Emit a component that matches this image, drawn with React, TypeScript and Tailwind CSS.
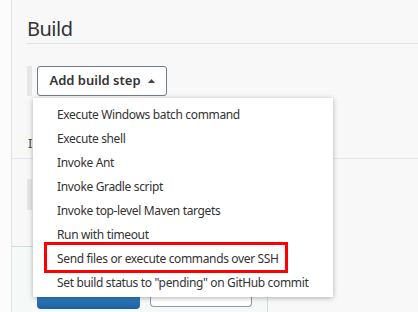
import React from "react";

const items = [
  "Execute Windows batch command",
  "Execute shell",
  "Invoke Ant",
  "Invoke Gradle script",
  "Invoke top-level Maven targets",
  "Run with timeout",
  "Send files or execute commands over SSH",
  'Set build status to "pending" on GitHub commit',
];

const font = { fontFamily: '"Noto Sans", "Open Sans", sans-serif' };

const App = () => {
  return (
    <div
      className="flex h-[312px] w-[418px] overflow-hidden bg-[#f8f8f8] text-[#333]"
      style={font}
    >
      {/* left gutter */}
      <div className="w-[12px] shrink-0 border-r border-[#e2e2e2] bg-[#fcfcfc]" />

      <div className="relative flex-1">
        {/* heading */}
        <div className="ml-[15px] h-[44px] border-b border-[#e4e4e4] pt-[16px]">
          <h2 className="text-[20px] leading-[26px] font-normal tracking-[-0.5px] text-[#333]">Build</h2>
        </div>

        {/* add build step */}
        <div className="mt-[22px] flex items-center pl-[15px]">
          <div className="h-[30px] w-[5px] bg-[#e6e6e6]" />
          <button className="ml-[5px] flex h-[30px] w-[130px] items-center justify-center gap-[7px] rounded-[3px] border-[1.5px] border-[#707d8b] bg-white text-[13px] font-semibold text-[#333]">
            Add build step
            <svg width="7" height="4" viewBox="0 0 7 4">
              <path d="M0 4 L3.5 0 L7 4 Z" fill="#444" />
            </svg>
          </button>
        </div>

        <div className="mt-[38px] h-[25px] border-b border-[#e6e6e6] pl-[16px] text-[13px] leading-[18px] text-[#5a4632]">
          I
        </div>

        <div className="mt-[20px] pl-[15px]">
          <div className="h-[31px] w-[5px] bg-[#e6e6e6]" />
        </div>

        {/* bottom panel */}
        <div className="mt-[36px] h-[70px] w-[256px] border-t border-r border-[#cfded6] bg-[#f5f9f7] pl-[25px] pt-[48px]">
          <div className="flex gap-[10px]">
            <div className="h-[14px] w-[103px] rounded-b-[4px] bg-gradient-to-b from-[#3585c8] to-[#1d5f9e]" />
            <div className="h-[12px] w-[102px] rounded-b-[4px] border-[1.5px] border-t-0 border-[#8b97a3] bg-white" />
          </div>
        </div>

        {/* dropdown menu */}
        <div className="absolute left-[21px] top-[98px] w-[300px] bg-white pt-[5px] pb-[2px] shadow-[0_1px_5px_rgba(0,0,0,0.3)]">
          {items.map((item) => (
            <div
              key={item}
              className="flex h-[24px] items-center pl-[24px] text-[12px] tracking-[-0.35px] whitespace-nowrap text-[#333]"
            >
              {item}
            </div>
          ))}
        </div>

        {/* highlight */}
        <div className="absolute left-[32px] top-[242px] h-[31px] w-[244px] border-[3px] border-[#ff0000]" />
      </div>
    </div>
  );
};

export default App;
